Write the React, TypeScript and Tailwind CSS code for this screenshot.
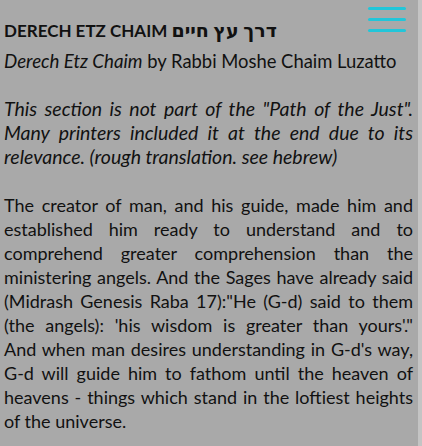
export default function App() {
  return (
    <div className="relative flex min-h-screen bg-[#a9a9a9] text-[#111111] font-['Lato','DejaVu_Sans',sans-serif]">
      <main className="flex-1 pl-[4px] pr-[5px]">
        <h1 className="mt-[18px] text-[17px] leading-[24px] font-bold">
          DERECH ETZ CHAIM <span className="text-[19px]">דרך עץ חיים</span>
        </h1>
        <p className="mt-[6px] text-[18.4px] leading-[24px]">
          <em className="text-[18.7px]">Derech Etz Chaim</em> by Rabbi Moshe Chaim Luzatto
        </p>
        <p className="mt-[24px] text-[19.5px] leading-[24px] italic text-justify">
          This section is not part of the "Path of the Just". Many printers included it at the end due
          to its relevance. (rough translation. see hebrew)
        </p>
        <p className="mt-[24px] text-[18px] leading-[24px] text-justify">
          The creator of man, and his guide, made him and established him ready to understand and to
          comprehend greater comprehension than the ministering angels. And the Sages have already said
          (Midrash Genesis Raba 17):"He <span className="whitespace-nowrap">(G-d)</span> said to them
          (the angels): 'his wisdom is greater than yours'."{' '}
          <span className="whitespace-nowrap">And when</span> man desires understanding in{' '}
          <span className="whitespace-nowrap">G-d's</span> way, <span className="whitespace-nowrap">G-d</span>{' '}
          will guide him to fathom until the heaven of heavens - things which stand in the loftiest
          heights of the universe.
        </p>
      </main>
      <div className="w-[4px] bg-[#c4c4c4]" />
      {/* menu button */}
      <button className="absolute right-[16px] top-[6px] flex w-[38px] flex-col gap-[8px] py-[1px]" aria-label="Open menu">
        <span className="h-[3px] w-full rounded-full bg-[#22c6d9]" />
        <span className="h-[3px] w-full rounded-full bg-[#22c6d9]" />
        <span className="h-[3px] w-full rounded-full bg-[#22c6d9]" />
      </button>
    </div>
  );
}
